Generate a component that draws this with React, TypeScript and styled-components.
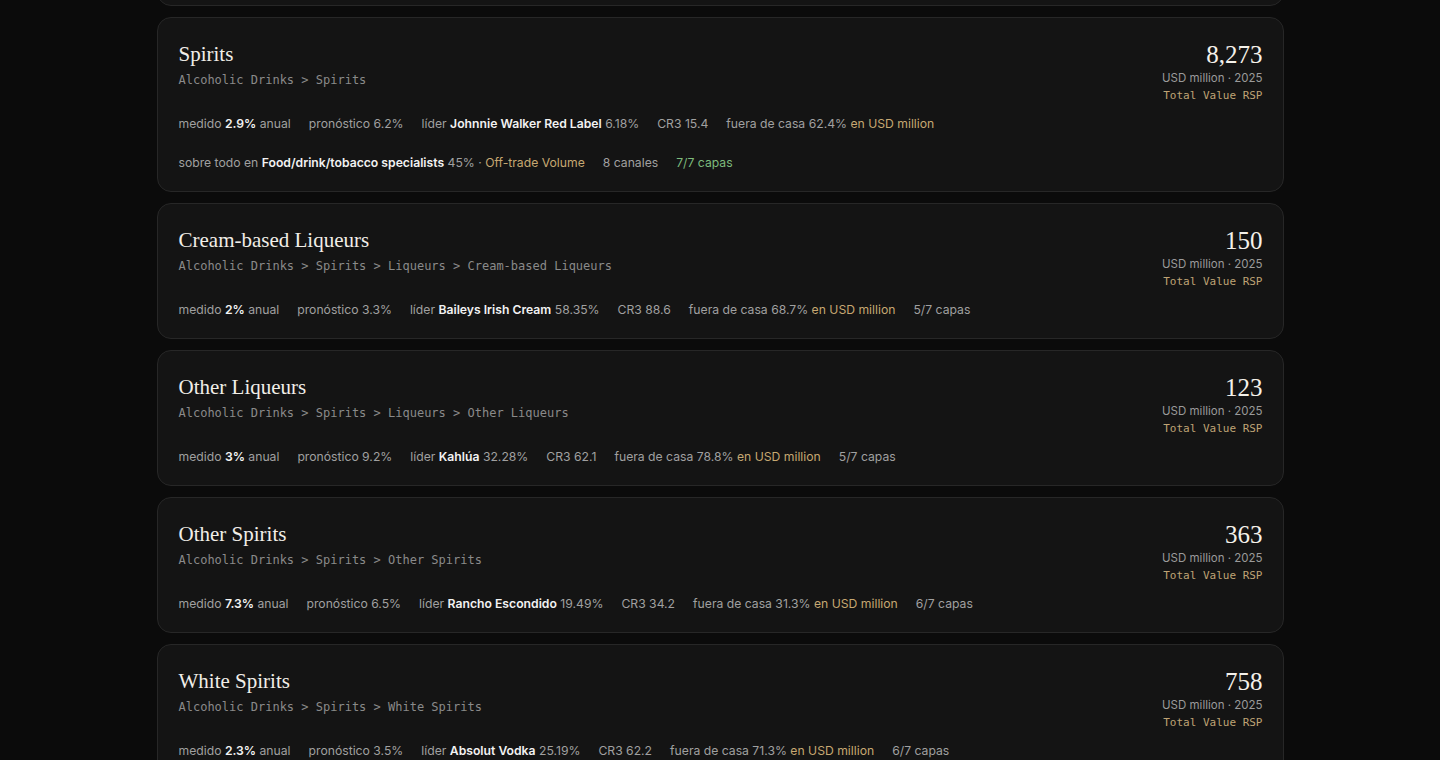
import styled, { createGlobalStyle } from 'styled-components'

type Tone = 'muted' | 'gold' | 'green'

type Piece = { text: string; bold?: boolean; tone?: Tone }
type Stat = Piece[]

type Category = {
  name: string
  path: string[]
  value: string
  rows: Stat[][]
}

const lead = (text: string): Piece => ({ text })
const strong = (text: string): Piece => ({ text, bold: true })
const gold = (text: string): Piece => ({ text, tone: 'gold' })
const green = (text: string): Piece => ({ text, tone: 'green' })

const baseRow = (
  measured: string,
  forecast: string,
  leader: string,
  share: string,
  cr3: string,
  away: string,
  layers?: Piece
): Stat[] => {
  const row: Stat[] = [
    [lead('medido '), strong(measured), lead(' anual')],
    [lead(`pronóstico ${forecast}`)],
    [lead('líder '), strong(leader), lead(` ${share}`)],
    [lead(`CR3 ${cr3}`)],
    [lead(`fuera de casa ${away} `), gold('en USD million')],
  ]
  if (layers) row.push([layers])
  return row
}

const categories: Category[] = [
  {
    name: 'Liqueurs',
    path: ['Alcoholic Drinks', 'Spirits', 'Liqueurs'],
    value: '1,042',
    rows: [baseRow('2.4%', '4.1%', 'Baileys Irish Cream', '21.40%', '48.3', '70.2%', lead('6/7 capas'))],
  },
  {
    name: 'Spirits',
    path: ['Alcoholic Drinks', 'Spirits'],
    value: '8,273',
    rows: [
      baseRow('2.9%', '6.2%', 'Johnnie Walker Red Label', '6.18%', '15.4', '62.4%'),
      [
        [lead('sobre todo en '), strong('Food/drink/tobacco specialists'), lead(' 45% · '), gold('Off-trade Volume')],
        [lead('8 canales')],
        [green('7/7 capas')],
      ],
    ],
  },
  {
    name: 'Cream-based Liqueurs',
    path: ['Alcoholic Drinks', 'Spirits', 'Liqueurs', 'Cream-based Liqueurs'],
    value: '150',
    rows: [baseRow('2%', '3.3%', 'Baileys Irish Cream', '58.35%', '88.6', '68.7%', lead('5/7 capas'))],
  },
  {
    name: 'Other Liqueurs',
    path: ['Alcoholic Drinks', 'Spirits', 'Liqueurs', 'Other Liqueurs'],
    value: '123',
    rows: [baseRow('3%', '9.2%', 'Kahlúa', '32.28%', '62.1', '78.8%', lead('5/7 capas'))],
  },
  {
    name: 'Other Spirits',
    path: ['Alcoholic Drinks', 'Spirits', 'Other Spirits'],
    value: '363',
    rows: [baseRow('7.3%', '6.5%', 'Rancho Escondido', '19.49%', '34.2', '31.3%', lead('6/7 capas'))],
  },
  {
    name: 'White Spirits',
    path: ['Alcoholic Drinks', 'Spirits', 'White Spirits'],
    value: '758',
    rows: [baseRow('2.3%', '3.5%', 'Absolut Vodka', '25.19%', '62.2', '71.3%', lead('6/7 capas'))],
  },
]

export default function App() {
  return (
    <>
      <GlobalStyle />
      <Page>
        <List>
          {categories.map((c) => (
            <Card key={c.name}>
              <Header>
                <div>
                  <Title>{c.name}</Title>
                  <Path>{c.path.join(' > ')}</Path>
                </div>
                <Figure>
                  <Value>{c.value}</Value>
                  <Unit>USD million · 2025</Unit>
                  <Measure>Total Value RSP</Measure>
                </Figure>
              </Header>
              {c.rows.map((row, i) => (
                <StatRow key={i}>
                  {row.map((stat, j) => (
                    <span key={j}>
                      {stat.map((p, k) =>
                        p.bold ? (
                          <Bold key={k}>{p.text}</Bold>
                        ) : (
                          <Tinted key={k} $tone={p.tone ?? 'muted'}>
                            {p.text}
                          </Tinted>
                        )
                      )}
                    </span>
                  ))}
                </StatRow>
              ))}
            </Card>
          ))}
        </List>
      </Page>
    </>
  )
}

const GlobalStyle = createGlobalStyle`
  html, body {
    margin: 0;
    background: #0b0b0b;
    overflow: hidden;
  }
`

const Page = styled.div`
  height: 760px;
  overflow: hidden;
  background: #0b0b0b;
  font-family: Inter, 'Noto Sans', sans-serif;
`

const List = styled.div`
  width: 1127px;
  margin: -130px auto 0;
  display: flex;
  flex-direction: column;
  gap: 11px;
`

const Card = styled.section`
  background: #141414;
  border: 1px solid #272727;
  border-radius: 14px;
  padding: 22px 20px 18px 21px;
  display: flex;
  flex-direction: column;
`

const Header = styled.div`
  display: flex;
  justify-content: space-between;
  align-items: flex-start;
`

const Title = styled.h3`
  margin: 0;
  font-family: 'Liberation Serif', 'DejaVu Serif', serif;
  font-weight: 400;
  font-size: 21px;
  line-height: 29px;
  color: #f1eee8;
`

const Path = styled.div`
  margin-top: 2px;
  font-family: 'DejaVu Sans Mono', 'Liberation Mono', monospace;
  font-size: 12px;
  line-height: 18px;
  color: #8a8a8a;
`

const Figure = styled.div`
  display: flex;
  flex-direction: column;
  align-items: flex-end;
`

const Value = styled.div`
  font-family: 'Liberation Serif', 'DejaVu Serif', serif;
  font-size: 25px;
  line-height: 30px;
  color: #f4f1ea;
`

const Unit = styled.div`
  font-size: 11.5px;
  line-height: 16px;
  color: #9a9a9a;
`

const Measure = styled.div`
  margin-top: 1px;
  font-family: 'DejaVu Sans Mono', 'Liberation Mono', monospace;
  font-size: 11px;
  line-height: 18px;
  color: #bfa374;
`

const StatRow = styled.div`
  margin-top: 9px;
  display: flex;
  flex-wrap: wrap;
  column-gap: 18px;
  font-size: 12.2px;
  line-height: 20px;
  & + & {
    margin-top: 19px;
  }
`

const toneColor: Record<Tone, string> = {
  muted: '#a0a0a0',
  gold: '#c6a872',
  green: '#7dbb7c',
}

const Tinted = styled.span<{ $tone: Tone }>`
  color: ${(p) => toneColor[p.$tone]};
`

const Bold = styled.b`
  font-weight: 600;
  color: #f2f2f2;
`
